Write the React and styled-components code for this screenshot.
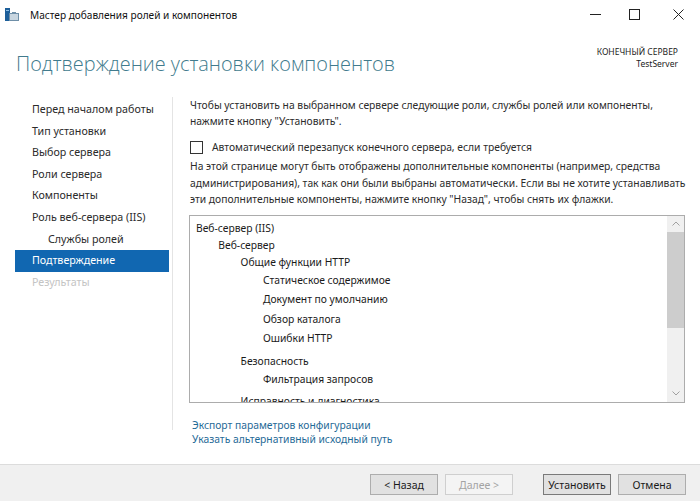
import styled, { createGlobalStyle } from "styled-components";

const GlobalStyle = createGlobalStyle`
  html, body {
    margin: 0;
    padding: 0;
    background: #ffffff;
  }
  body {
    font-family: "Noto Sans", "Open Sans", "DejaVu Sans", sans-serif;
    color: #1e1e1e;
  }
`;

const Window = styled.div`
  width: 700px;
  height: 501px;
  display: flex;
  flex-direction: column;
  background: #ffffff;
  overflow: hidden;
`;

const TitleBar = styled.div`
  height: 29px;
  display: flex;
  align-items: center;
  padding-left: 5px;
  flex-shrink: 0;
`;

const TitleText = styled.span`
  font-size: 10.1px;
  color: #111;
  margin-left: 11px;
  flex: 1;
`;

const Controls = styled.div`
  display: flex;
  height: 29px;
`;

const ControlButton = styled.div`
  width: 44px;
  height: 29px;
  display: flex;
  align-items: center;
  justify-content: center;
  margin-left: ${(p) => p.$gap || 0}px;
`;

const Header = styled.div`
  height: 68px;
  display: flex;
  justify-content: space-between;
  align-items: flex-start;
  padding: 0 22px 0 16px;
  flex-shrink: 0;
`;

const Heading = styled.h1`
  margin: 22px 0 0;
  font-family: "Open Sans", "Noto Sans", sans-serif;
  font-weight: 300;
  font-size: 19.9px;
  line-height: 26px;
  color: #417b8d;
`;

const ServerInfo = styled.div`
  margin-top: 17px;
  text-align: right;
  font-size: 8.5px;
  line-height: 12px;
  color: #222;
`;

const Body = styled.div`
  flex: 1;
  display: flex;
  min-height: 0;
`;

const Nav = styled.nav`
  width: 157px;
  flex-shrink: 0;
  padding: 2px 0 0 15px;
  margin-bottom: 34px;
  border-right: 1px solid #e4e4e4;
  display: flex;
  flex-direction: column;
`;

const NavItem = styled.div`
  height: 21.6px;
  line-height: 21.6px;
  width: 154px;
  font-size: 10.7px;
  white-space: nowrap;
  padding-left: ${(p) => (p.$sub ? 33 : 17)}px;
  box-sizing: border-box;
  color: ${(p) => (p.$active ? "#ffffff" : p.$disabled ? "#c4c4c4" : "#2b2b2b")};
  background: ${(p) => (p.$active ? "#1167b1" : "transparent")};
`;

const Content = styled.div`
  flex: 1;
  padding: 0 16px 0 16px;
  display: flex;
  flex-direction: column;
  font-size: 10.3px;
  color: #2b2b2b;
`;

const Paragraph = styled.p`
  margin: 0;
  padding-left: 1px;
  white-space: nowrap;
  flex-shrink: 0;
  line-height: ${(p) => p.$lh || 16}px;
  margin-top: ${(p) => p.$mt || 0}px;
`;

const CheckRow = styled.label`
  display: flex;
  align-items: center;
  flex-shrink: 0;
  height: 14px;
  margin-top: 11px;
  padding-left: 1px;
  white-space: nowrap;
`;

const CheckBox = styled.span`
  width: 11px;
  height: 11px;
  border: 1px solid #333;
  background: #fff;
  margin-right: 9px;
`;

const ListBox = styled.div`
  margin-top: 7px;
  height: 186px;
  flex-shrink: 0;
  border: 1px solid #acacac;
  display: flex;
  overflow: hidden;
`;

const TreeList = styled.div`
  flex: 1;
  padding: 4px 0 0 6px;
  overflow: hidden;
`;

const TreeItem = styled.div`
  font-size: 10.3px;
  color: #1a1a1a;
  white-space: nowrap;
  height: ${(p) => (p.$level === 3 ? 19.5 : 17)}px;
  line-height: ${(p) => (p.$level === 3 ? 19.5 : 17)}px;
  padding-left: ${(p) => p.$level * 22.3}px;
  margin-top: ${(p) => (p.$after ? 4 : 0)}px;
`;

const ScrollBar = styled.div`
  width: 17px;
  background: #f0f0f0;
  display: flex;
  flex-direction: column;
  align-items: stretch;
`;

const Arrow = styled.div`
  height: 16px;
  display: flex;
  align-items: center;
  justify-content: center;
`;

const Track = styled.div`
  flex: 1;
  display: flex;
  flex-direction: column;
`;

const Thumb = styled.div`
  height: 96px;
  background: #cdcdcd;
`;

const Links = styled.div`
  margin-top: 15px;
  display: flex;
  flex-direction: column;
  flex-shrink: 0;
  padding-left: 3px;
`;

const Link = styled.a`
  font-size: 10.3px;
  line-height: 14px;
  color: #1f6a97;
  text-decoration: none;
  white-space: nowrap;
`;

const Footer = styled.div`
  height: 37px;
  flex-shrink: 0;
  border-top: 1px solid #dcdcdc;
  background: #f0f0f0;
  display: flex;
  justify-content: flex-end;
  align-items: flex-start;
  padding: 9px 14px 0 0;
  box-sizing: border-box;
`;

const Button = styled.button`
  width: 68px;
  height: 21px;
  margin-left: ${(p) => p.$gap || 7}px;
  font-family: inherit;
  font-size: 10.5px;
  padding: 0;
  border: 1px solid ${(p) => (p.$disabled ? "#cfcfcf" : p.$default ? "#7a7a7a" : "#adadad")};
  background: ${(p) => (p.$disabled ? "#f4f4f4" : "#e1e1e1")};
  color: ${(p) => (p.$disabled ? "#a3a3a3" : "#1a1a1a")};
`;

const navItems = [
  { label: "Перед началом работы" },
  { label: "Тип установки" },
  { label: "Выбор сервера" },
  { label: "Роли сервера" },
  { label: "Компоненты" },
  { label: "Роль веб-сервера (IIS)" },
  { label: "Службы ролей", sub: true },
  { label: "Подтверждение", active: true },
  { label: "Результаты", disabled: true },
];

const tree = [
  { label: "Веб-сервер (IIS)", level: 0 },
  { label: "Веб-сервер", level: 1 },
  { label: "Общие функции HTTP", level: 2 },
  { label: "Статическое содержимое", level: 3 },
  { label: "Документ по умолчанию", level: 3 },
  { label: "Обзор каталога", level: 3 },
  { label: "Ошибки HTTP", level: 3 },
  { label: "Безопасность", level: 2, after: true },
  { label: "Фильтрация запросов", level: 3 },
  { label: "Исправность и диагностика", level: 2, after: true },
];

const AppIcon = () => (
  <svg width="14" height="13" viewBox="0 0 14 13">
    <rect x="0" y="0" width="5" height="13" fill="#1d5f9a" />
    <rect x="1" y="2" width="3" height="1" fill="#8fc0e8" />
    <rect x="4" y="5" width="10" height="8" fill="#6f8fa8" />
    <rect x="5" y="6" width="8" height="6" fill="#c9d6e0" />
    <rect x="7" y="4" width="4" height="2" fill="#6f8fa8" />
  </svg>
);

const App = () => {
  return (
    <Window>
      <GlobalStyle />
      <TitleBar>
        <AppIcon />
        <TitleText>Мастер добавления ролей и компонентов</TitleText>
        <Controls>
          <ControlButton>
            <svg width="11" height="11" viewBox="0 0 11 11">
              <line x1="0" y1="5.5" x2="11" y2="5.5" stroke="#222" strokeWidth="1" />
            </svg>
          </ControlButton>
          <ControlButton $gap={-5}>
            <svg width="11" height="11" viewBox="0 0 11 11">
              <rect x="0.5" y="0.5" width="10" height="10" fill="none" stroke="#222" strokeWidth="1" />
            </svg>
          </ControlButton>
          <ControlButton>
            <svg width="11" height="11" viewBox="0 0 11 11">
              <path d="M0.5 0.5 L10.5 10.5 M10.5 0.5 L0.5 10.5" stroke="#222" strokeWidth="1" />
            </svg>
          </ControlButton>
        </Controls>
      </TitleBar>

      <Header>
        <Heading>Подтверждение установки компонентов</Heading>
        <ServerInfo>
          <div>КОНЕЧНЫЙ СЕРВЕР</div>
          <div>TestServer</div>
        </ServerInfo>
      </Header>

      <Body>
        <Nav>
          {navItems.map((item) => (
            <NavItem
              key={item.label}
              $sub={item.sub}
              $active={item.active}
              $disabled={item.disabled}
            >
              {item.label}
            </NavItem>
          ))}
        </Nav>

        <Content>
          <Paragraph>
            Чтобы установить на выбранном сервере следующие роли, службы ролей или компоненты,
            <br />
            нажмите кнопку "Установить".
          </Paragraph>

          <CheckRow>
            <CheckBox />
            Автоматический перезапуск конечного сервера, если требуется
          </CheckRow>

          <Paragraph $lh={16.5} $mt={4}>
            На этой странице могут быть отображены дополнительные компоненты (например, средства
            <br />
            администрирования), так как они были выбраны автоматически. Если вы не хотите устанавливать
            <br />
            эти дополнительные компоненты, нажмите кнопку "Назад", чтобы снять их флажки.
          </Paragraph>

          <ListBox>
            <TreeList>
              {tree.map((t) => (
                <TreeItem key={t.label} $level={t.level} $after={t.after}>
                  {t.label}
                </TreeItem>
              ))}
            </TreeList>
            <ScrollBar>
              <Arrow>
                <svg width="8" height="5" viewBox="0 0 8 5">
                  <path d="M0.5 4.5 L4 1 L7.5 4.5" fill="none" stroke="#a0a0a0" strokeWidth="1" />
                </svg>
              </Arrow>
              <Track>
                <Thumb />
              </Track>
              <Arrow>
                <svg width="8" height="5" viewBox="0 0 8 5">
                  <path d="M0.5 0.5 L4 4 L7.5 0.5" fill="none" stroke="#a0a0a0" strokeWidth="1" />
                </svg>
              </Arrow>
            </ScrollBar>
          </ListBox>

          <Links>
            <Link>Экспорт параметров конфигурации</Link>
            <Link>Указать альтернативный исходный путь</Link>
          </Links>
        </Content>
      </Body>

      <Footer>
        <Button>&lt; Назад</Button>
        <Button $disabled>Далее &gt;</Button>
        <Button $gap={30} $default>Установить</Button>
        <Button>Отмена</Button>
      </Footer>
    </Window>
  );
};

export default App;
